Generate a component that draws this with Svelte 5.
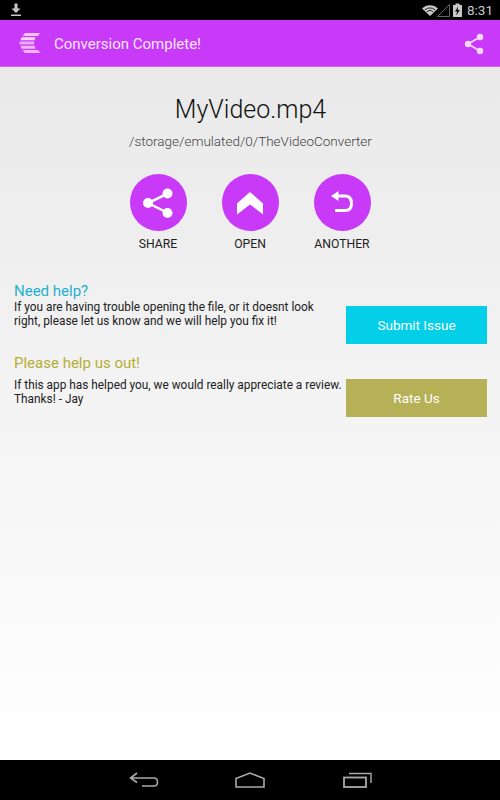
<script>
    const actions = [
        { label: 'SHARE', icon: 'share' },
        { label: 'OPEN', icon: 'open' },
        { label: 'ANOTHER', icon: 'another' }
    ];
</script>

<div class="screen">
    <div class="status">
        <svg class="download" width="12" height="14" viewBox="0 0 12 14">
            <path d="M4.500 0.500h3v5h3l-4.500 4.500l-4.500-4.500h3z" fill="#c8c8c8" />
            <rect x="1" y="11.500" width="10" height="1.500" fill="#c8c8c8" />
        </svg>
        <div class="status-right">
            <svg width="16" height="13" viewBox="0 0 20 14">
                <path d="M0 4.500a14 14 0 0 1 20 0l-10 9.500z" fill="#c8c8c8" />
                <path d="M3.500 6.200a10 10 0 0 1 13 0" fill="none" stroke="#000" stroke-width="1" />
                <path d="M6 8.500a6 6 0 0 1 8 0" fill="none" stroke="#000" stroke-width="1" />
            </svg>
            <svg class="signal" width="13" height="14" viewBox="0 0 13 14">
                <path d="M0.500 13.500L12.500 1.500V13.500z" fill="none" stroke="#666" stroke-width="1" />
            </svg>
            <svg class="battery" width="9" height="14" viewBox="0 0 9 14">
                <path d="M0 2h2.500V0.500h4V2H9v12H0z" fill="#c8c8c8" />
                <path d="M5.200 3.500L2 8.500h2l-0.700 4l3.500-5.500H4.600z" fill="#000" />
            </svg>
            <span class="time">8:31</span>
        </div>
    </div>

    <header class="bar">
        <svg class="logo" width="22" height="22" viewBox="0 0 22 22">
            <path d="M6 0h15l-2 3H3.500z" fill="#f5c0ff" />
            <path d="M2.500 4.200h14l-1 3H1.500z" fill="#f9d8ff" />
            <path d="M0.500 8.500h14.500v3H0.500z" fill="#f0a8ff" />
            <path d="M1.500 12.800h14l1 3H2.500z" fill="#f3b5ff" />
            <path d="M3.500 17h15.500l2.500 3H6z" fill="#f3b5ff" />
        </svg>
        <h1>Conversion Complete!</h1>
        <svg class="bar-share" width="20" height="22" viewBox="0 0 20 22">
            <path d="M16 4L4 11l12 7" fill="none" stroke="#f8d8ff" stroke-width="1.800" />
            <circle cx="16" cy="4" r="3.200" fill="#f8d8ff" />
            <circle cx="4" cy="11" r="3.200" fill="#f8d8ff" />
            <circle cx="16" cy="18" r="3.200" fill="#f8d8ff" />
        </svg>
    </header>

    <main>
        <h2>MyVideo.mp4</h2>
        <p class="path">/storage/emulated/0/TheVideoConverter</p>

        <div class="actions">
            {#each actions as action}
                <div class="action">
                    <div class="circle">
                        {#if action.icon === 'share'}
                            <svg width="32" height="32" viewBox="0 0 32 32">
                                <path d="M26 6.500L6 16l20 10" fill="none" stroke="#fff" stroke-width="2.500" />
                                <circle cx="25.500" cy="6.500" r="5" fill="#fff" />
                                <circle cx="6" cy="16" r="5" fill="#fff" />
                                <circle cx="25.500" cy="26" r="5" fill="#fff" />
                            </svg>
                        {:else if action.icon === 'open'}
                            <svg width="28" height="24" viewBox="0 0 28 24">
                                <path d="M14 1L27 12.500V23.500L14 13.500L1 23.500V12.500z" fill="#fff" />
                            </svg>
                        {:else}
                            <svg width="24" height="24" viewBox="0 0 24 24">
                                <path d="M1 5L8.500 0V10z" fill="#fff" />
                                <path d="M8 5H15Q21.500 5 21.500 12.500Q21.500 19.500 15 19.500H5" fill="none" stroke="#fff" stroke-width="3" />
                            </svg>
                        {/if}
                    </div>
                    <span>{action.label}</span>
                </div>
            {/each}
        </div>

        <section class="help">
            <div class="help-text">
                <h3 class="blue">Need help?</h3>
                <p>If you are having trouble opening the file, or it doesnt look<br />right, please let us know and we will help you fix it!</p>
            </div>
            <button class="cyan">Submit Issue</button>
        </section>

        <section class="review">
            <div class="help-text">
                <h3 class="olive">Please help us out!</h3>
                <p>If this app has helped you, we would really appreciate a review.<br />Thanks! - Jay</p>
            </div>
            <button class="khaki">Rate Us</button>
        </section>
    </main>

    <nav class="softkeys">
        <svg width="30" height="16" viewBox="0 0 30 16">
            <path d="M8 1L1.500 6L8 10.500M2 6H25Q28.500 6 28.500 10Q28.500 14 25 14H13" fill="none" stroke="#aaa" stroke-width="1.600" />
        </svg>
        <svg class="home" width="30" height="16" viewBox="0 0 30 16">
            <path d="M1 6.500L15 1L29 6.500V15H1z" fill="none" stroke="#aaa" stroke-width="1.600" />
        </svg>
        <svg width="30" height="16" viewBox="0 0 30 16">
            <rect x="1" y="5.500" width="22" height="9.500" fill="none" stroke="#aaa" stroke-width="1.800" />
            <path d="M6 1.500H28V11" fill="none" stroke="#aaa" stroke-width="1.400" />
        </svg>
    </nav>
</div>

<style>
    :global(body) {
        margin: 0;
    }

    .screen {
        width: 500px;
        height: 800px;
        display: flex;
        flex-direction: column;
        font-family: Roboto, "Liberation Sans", sans-serif;
        color: #111;
    }

    .status {
        height: 20px;
        background: #000;
        display: flex;
        align-items: center;
        justify-content: space-between;
        padding: 0 7px 0 10px;
    }

    .status-right {
        display: flex;
        align-items: center;
        gap: 1px;
    }

    .signal {
        margin-left: -2px;
    }

    .battery {
        margin-left: 2px;
    }

    .time {
        margin-left: 4px;
        font-size: 13.500px;
        color: #c8c8c8;
    }

    .bar {
        height: 47px;
        box-sizing: border-box;
        background: #c83af8;
        display: flex;
        align-items: center;
        padding: 2px 16px 0 19px;
        border-bottom: 1px solid #d06ae8;
    }

    .bar h1 {
        flex: 1;
        margin: 0 0 0 13px;
        font-size: 15px;
        font-weight: 400;
        color: #fbe6ff;
    }

    main {
        flex: 1;
        background: linear-gradient(#e9e9e9, #fff);
        padding: 0 13px 0 14px;
    }

    h2 {
        margin: 28px 0 0;
        text-align: center;
        font-size: 25px;
        line-height: 30px;
        font-weight: 300;
        color: #111;
    }

    .path {
        margin: 7px 0 0;
        text-align: center;
        font-size: 13.500px;
        line-height: 18px;
        font-weight: 300;
        color: #444;
    }

    .actions {
        display: flex;
        justify-content: center;
        gap: 35px;
        margin: 24px 0 0 -1px;
    }

    .action {
        width: 57px;
        display: flex;
        flex-direction: column;
        align-items: center;
    }

    .circle {
        width: 57px;
        height: 57px;
        border-radius: 50%;
        background: #c83af8;
        display: flex;
        align-items: center;
        justify-content: center;
    }

    .action span {
        margin-top: 6px;
        font-size: 12.200px;
        line-height: 15px;
        white-space: nowrap;
        color: #222;
    }

    section {
        display: flex;
        justify-content: space-between;
    }

    .help {
        margin-top: 30px;
    }

    .review {
        margin-top: 10px;
    }

    .help-text {
        flex: 1;
    }

    h3 {
        margin: 0;
        font-size: 15px;
        line-height: 18px;
        font-weight: 400;
    }

    .blue {
        color: #1fb1cf;
    }

    .olive {
        color: #b5ae35;
    }

    .help-text p {
        margin: 0;
        font-size: 11.850px;
        line-height: 14px;
        color: #222;
    }

    .review p {
        margin-top: 6px;
    }

    button {
        width: 141px;
        height: 38px;
        flex: none;
        border: 0;
        padding: 0;
        font: 400 13.500px Roboto, "Liberation Sans", sans-serif;
        color: #fff;
    }

    .help button {
        margin-top: 24px;
    }

    .review button {
        margin-top: 25px;
    }

    .cyan {
        background: #03cfe8;
    }

    .khaki {
        background: #b6b056;
    }

    .softkeys {
        height: 40px;
        background: #000;
        display: flex;
        align-items: center;
        justify-content: center;
        gap: 76px;
        padding-left: 2px;
    }

    .home {
        margin-right: 2px;
    }
</style>
